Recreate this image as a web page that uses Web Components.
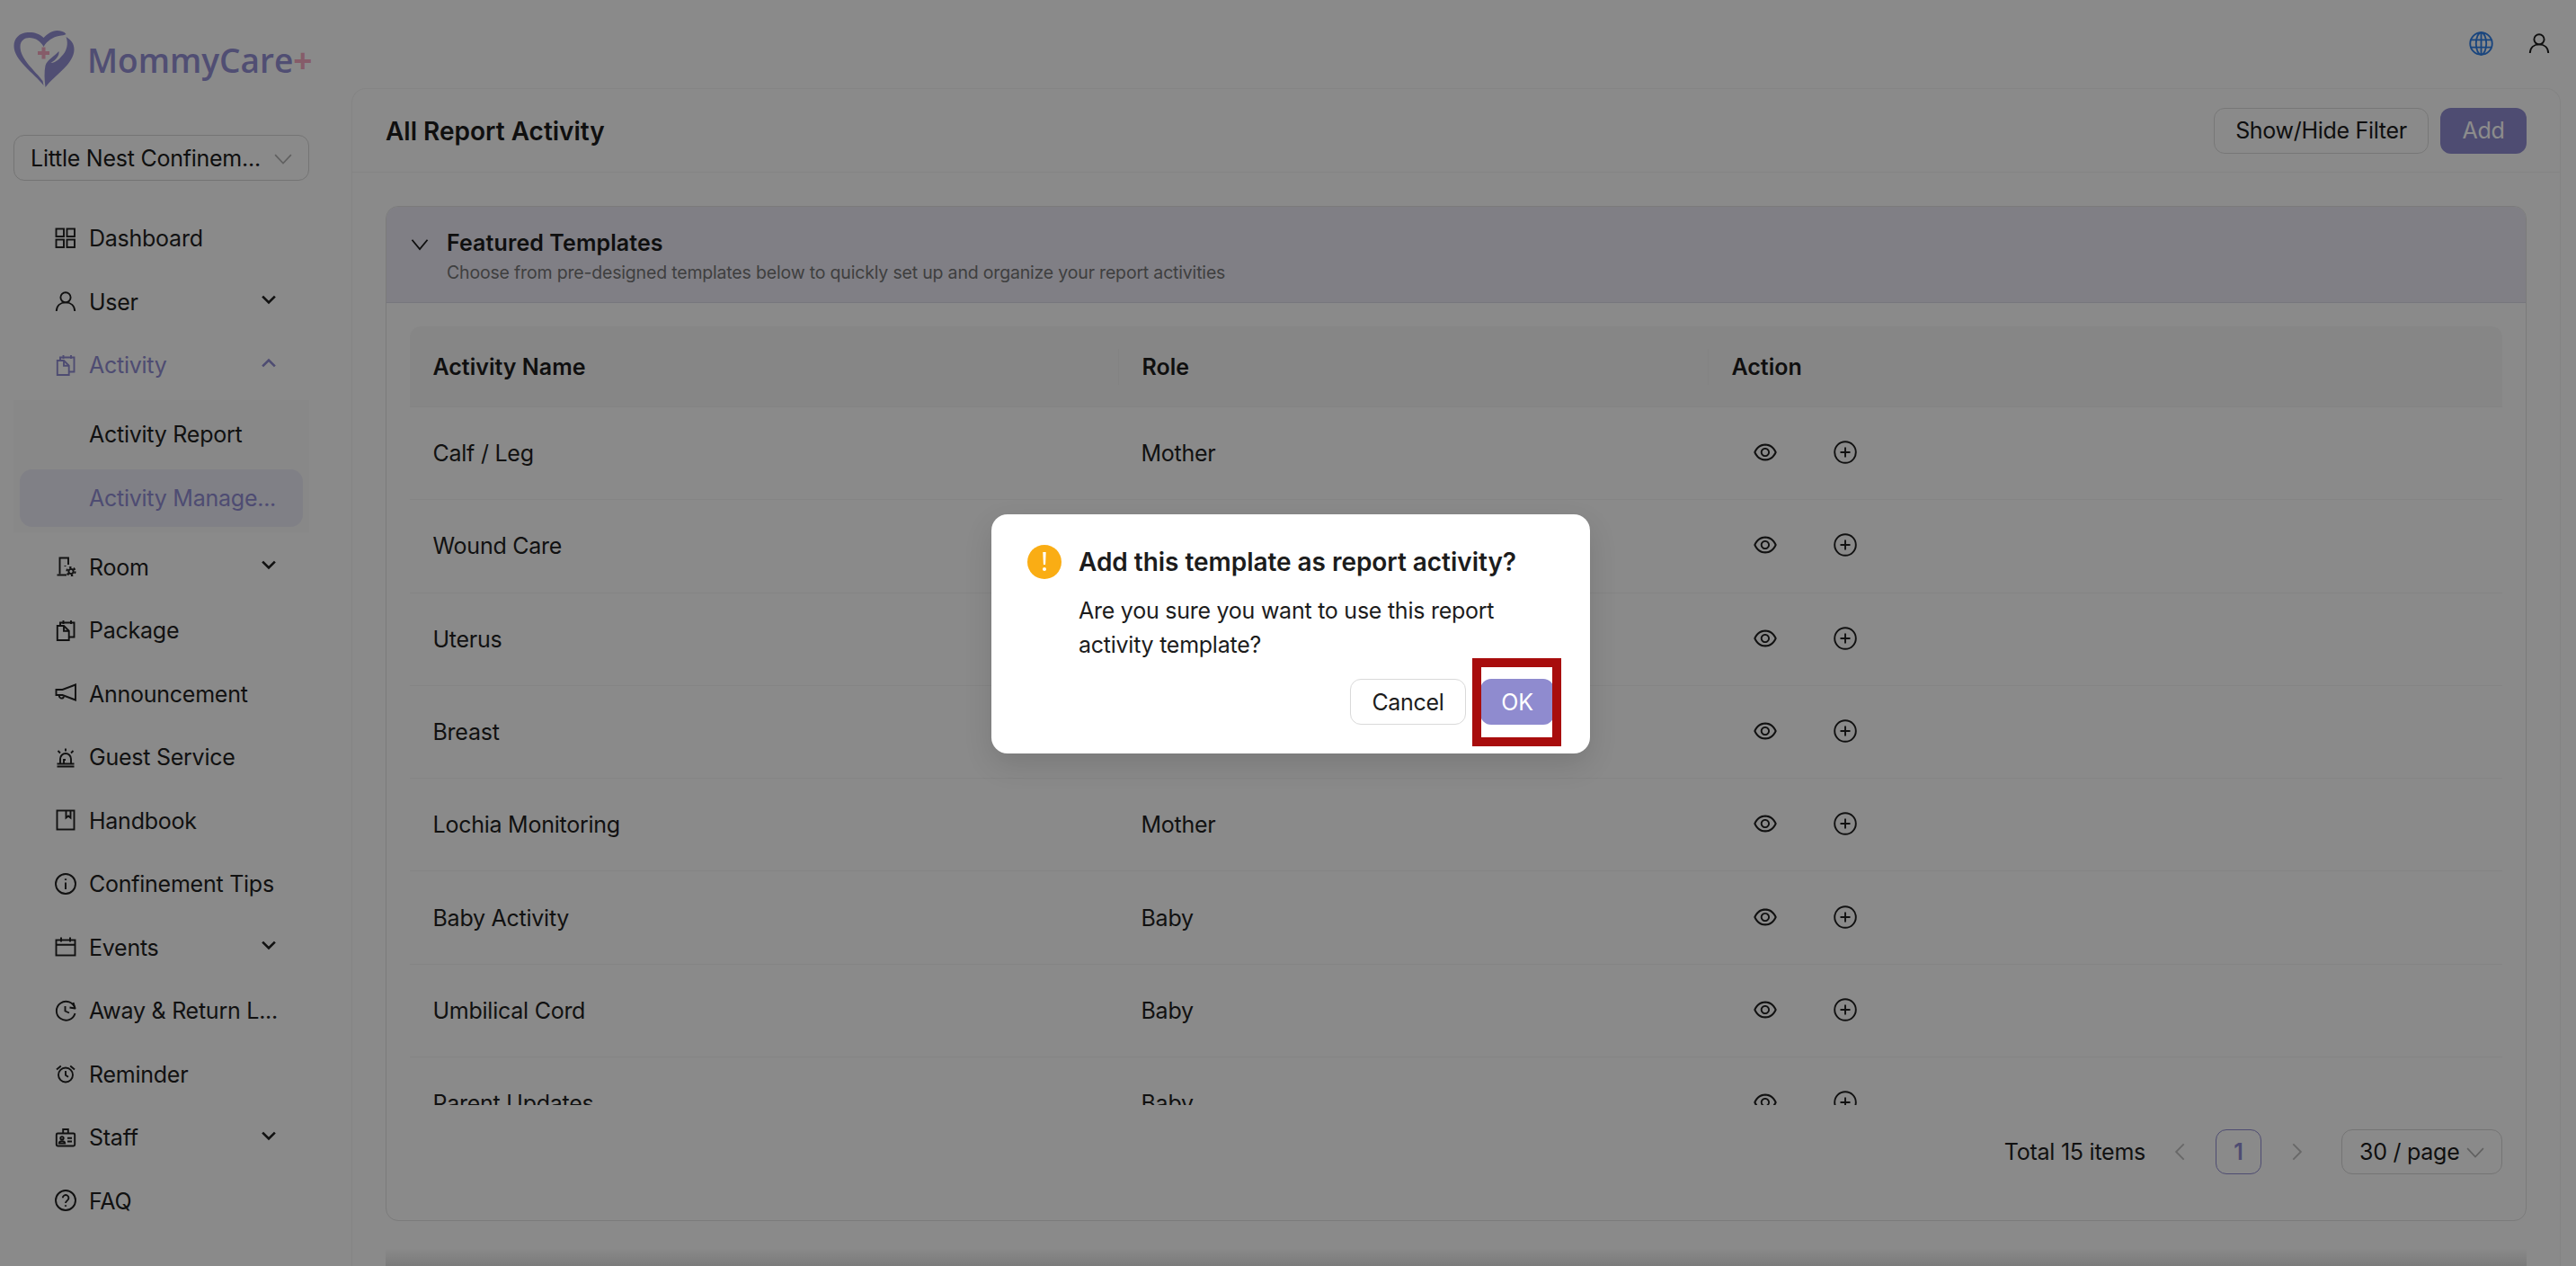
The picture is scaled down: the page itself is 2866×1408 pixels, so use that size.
<!DOCTYPE html>
<html lang="en">
<head>
<meta charset="utf-8">
<title>MommyCare+</title>
<style>
html,body{margin:0;padding:0;height:100%;overflow:hidden;background:#fbfbfb}
body{font-family:Inter,"Liberation Sans",sans-serif;color:#1c1c1c}
</style>
</head>
<body>
<app-shell></app-shell>
<script>
const I = {
 dashboard:'<rect x="1.500" y="1.500" width="8.500" height="8.500"/><rect x="13.500" y="1.500" width="8.500" height="8.500"/><rect x="1.500" y="13.500" width="8.500" height="8.500"/><rect x="13.500" y="13.500" width="8.500" height="8.500"/>',
 user:'<circle cx="12" cy="7.800" r="5.600"/><path d="M1.800 23c.3-6 4.400-9.600 10.200-9.600S21.900 17 22.200 23"/>',
 activity:'<path d="M6 7V3.500h15.500V19.500H16"/><path d="M9.500 1v4M18 1v4"/><path d="M2.800 7H10l5.700 5.700V23H2.800z"/><path d="M10 7v5.700h5.700"/>',
 room:'<path d="M5.500 20.500V2.500H15V10"/><path d="M2.500 21.500H13"/><path d="M11.500 11v1"/><circle cx="18" cy="17.500" r="2.600"/><circle cx="18" cy="17.500" r="4.600" stroke-dasharray="2.400 2.400" stroke-width="2"/>',
 announce:'<path d="M23 2.500 8.500 8H1.500v6h7L23 19.500z"/><path d="M5 14.500c-.8 3.400 4.300 4.300 5 1"/>',
 guest:'<path d="M6 19.500V14a6 6 0 0 1 12 0v5.500"/><path d="M10 19.500v-4.500h2"/><path d="M2.500 19.500h19M2.500 22.500h19"/><path d="M12 2.500V5.500M3.500 5 6 7.500M20.500 5 18 7.500"/>',
 book:'<rect x="2.500" y="1.500" width="19" height="21"/><path d="M12.500 1.500V9.500l2.500-2 2.500 2V1.500"/>',
 info:'<circle cx="12" cy="12" r="11"/><path d="M12 10.500V18"/><path d="M12 6.300v1.600" stroke-width="2.200"/>',
 events:'<rect x="1.500" y="4.500" width="21" height="17"/><path d="M1.500 9.800h21M7 1.500v5M17 1.500v5"/>',
 away:'<path d="M22.500 9.500A10.500 10.500 0 1 0 22.500 15"/><path d="M20.500 3 22.500 9.500 16.500 8.500" stroke-linejoin="round"/><path d="M11.500 7v5.500l4.500 2"/>',
 reminder:'<circle cx="12" cy="13.500" r="8"/><path d="M12 9v4.800l3 2"/><path d="M2 7.500 6.800 3.500M22 7.500 17.200 3.500"/>',
 staff:'<rect x="1.800" y="7.500" width="20.400" height="14" rx="1.500"/><path d="M9.200 8V3h5.600v5"/><circle cx="8" cy="12.800" r="1.700"/><path d="M4.800 18.500c0-3.200 6.400-3.200 6.400 0z"/><path d="M14 12.800h5M14 16.500h5"/>',
 faq:'<circle cx="12" cy="12" r="11"/><path d="M8.800 9.300a3.300 3.300 0 1 1 5 2.900c-1.100.7-1.800 1.300-1.800 2.900"/><path d="M12 17.300v1.500" stroke-width="2.200"/>'
};
const svg=(name,size,sw=1.9)=>`<svg width="${size}" height="${size}" viewBox="0 0 24 24" fill="none" stroke="currentColor" stroke-width="${sw}">${I[name]}</svg>`;
const chevDown=(w=14,sw=2.4)=>`<svg width="${w}" height="${w}" viewBox="0 0 14 14" fill="none" stroke="currentColor" stroke-width="${sw}"><path d="M1 4l6 6 6-6"/></svg>`;
const thin=(d,w=18)=>`<svg width="${w}" height="${w}" viewBox="0 0 18 18" fill="none" stroke="currentColor" stroke-width="1.500"><path d="${d}"/></svg>`;

function el(name,html){
 customElements.define(name,class extends HTMLElement{
  connectedCallback(){ if(this.shadowRoot)return; this.attachShadow({mode:'open'}).innerHTML=typeof html==='function'?html(this):html; }
 });
}

el('mc-logo',`<style>
:host{display:flex;align-items:center;height:64px;gap:14px}
svg{display:block;flex:none}
.t{font:600 37px "Open Sans",sans-serif;color:#938ed2;line-height:64px;margin-top:4px;white-space:nowrap}
.p{color:#f5a8c0;font-weight:700;margin-left:0}
</style>
<svg width="68" height="64" viewBox="0 0 67 64">
<g fill="#938ed2">
<path d="M33 9C28 4 22 2.500 15 3 6 3.500 0 10 0 18c0 16 22 30 33 44l-1-5C24 46 7 33 7 19 7 12 12 9 17 9c7 0 13 4 16 10 4-7 11-11 17-12 4-.5 6-1 8-2-2-3-6-4-10-4-6 0-11 4-15 8z"/>
<path d="M58 8c5 3 9 7 9 14 0 16-21 28-32 42-1-8-1.500-17 0-24 2-7 10-10 15-16 1 5-4 10-9 13 6 0 11-6 15-11 4-6 4-13 2-18z"/>
</g>
<path d="M33 19.500v13M26.500 26h13" stroke="#f5a8c0" stroke-width="4"/>
</svg>
<div class="t">MommyCare<span class="p">+</span></div>`);

el('mc-select',h=>`<style>
:host{display:flex;align-items:center;justify-content:space-between;box-sizing:border-box;border:1.500px solid #d4d4d4;border-radius:12px;background:#fbfbfb;height:${h.getAttribute('h')||51}px;padding:0 ${h.getAttribute('pr')||18}px 0 ${h.getAttribute('pl')||18}px;font-size:25px;letter-spacing:-.25px;white-space:nowrap;color:#1c1c1c}
span{display:flex;color:#b0b0b0}
</style><slot></slot><span>${thin('M1 5.500 9 14l8-8.500',20)}</span>`);

el('nav-item',h=>{
 const ic=h.getAttribute('icon'),ch=h.getAttribute('chev'),act=h.hasAttribute('active'),sel=h.hasAttribute('selected');
 return `<style>
 :host{display:flex;align-items:center;height:64px;margin:0 7px;padding:0 30px 0 39px;box-sizing:border-box;border-radius:14px;font-size:25px;letter-spacing:-.25px;color:${act||sel?'#8f8ad0':'#1f1f1f'};background:${sel?'#e9e9f5':'transparent'};white-space:nowrap}
 .ic{display:flex;width:24px;margin-right:14px;flex:none;justify-content:center;margin-top:-1px}
 .lb{flex:1}
 .ch{display:flex;margin-top:-5px;${ch==='up'?'transform:rotate(180deg);':''}}
 </style><span class="ic">${ic?svg(ic,24):''}</span><span class="lb"><slot></slot></span>${ch?`<span class="ch">${chevDown(16,2.300)}</span>`:''}`;
});

el('side-bar',`<style>
:host{display:block;width:391px;flex:none;box-sizing:border-box;padding:33px 0 0 15px}
mc-select{width:329px;margin:53px 0 32px}
nav{display:flex;flex-direction:column;gap:6.500px;width:329px}
.sub{display:flex;flex-direction:column;gap:6.500px;padding:6.500px 0;background:#f7f7f7}
</style>
<mc-logo></mc-logo>
<mc-select>Little Nest Confinem...</mc-select>
<nav>
<nav-item icon="dashboard">Dashboard</nav-item>
<nav-item icon="user" chev="down">User</nav-item>
<nav-item icon="activity" chev="up" active>Activity</nav-item>
<div class="sub"><nav-item>Activity Report</nav-item><nav-item selected>Activity Manage...</nav-item></div>
<nav-item icon="room" chev="down">Room</nav-item>
<nav-item icon="activity">Package</nav-item>
<nav-item icon="announce">Announcement</nav-item>
<nav-item icon="guest">Guest Service</nav-item>
<nav-item icon="book">Handbook</nav-item>
<nav-item icon="info">Confinement Tips</nav-item>
<nav-item icon="events" chev="down">Events</nav-item>
<nav-item icon="away">Away &amp; Return L...</nav-item>
<nav-item icon="reminder">Reminder</nav-item>
<nav-item icon="staff" chev="down">Staff</nav-item>
<nav-item icon="faq">FAQ</nav-item>
</nav>`);

el('top-bar',`<style>
:host{display:flex;justify-content:flex-end;align-items:center;gap:39px;height:96px;margin-bottom:2px;padding-right:29px;color:#1c1c1c}
svg{display:block}
</style>
<svg width="27" height="27" viewBox="0 0 26 26" fill="none" stroke="#2f7fe6" stroke-width="1.800"><circle cx="13" cy="13" r="11.800"/><ellipse cx="13" cy="13" rx="5.500" ry="11.800"/><path d="M13 1v24M2 9h22M2 17h22"/></svg>
${svg('user',24,1.900)}`);

el('mc-button',h=>{
 const p=h.hasAttribute('primary');
 return `<style>
 :host{display:inline-flex;align-items:center;justify-content:center;box-sizing:border-box;height:51px;width:${h.getAttribute('w')}px;border-radius:12px;font-size:25px;letter-spacing:-.3px;white-space:nowrap;${p?'background:#8f8bcf;color:#fff;':'background:'+(h.hasAttribute('light')?'#fff':'#fbfbfb')+';border:1.500px solid #d9d9d9;color:#1c1c1c;'}}
 </style><slot></slot>`;
});

el('table-row',h=>`<style>
:host{display:grid;grid-template-columns:788px 656px 1fr;height:103.300px;align-items:center;border-bottom:1.500px solid #f0f0f0;box-sizing:border-box;font-size:25px;letter-spacing:-.25px;color:#1f1f1f}
div{padding-left:25.500px}
.a{display:flex;align-items:center;gap:63px;padding-left:51px;height:26px;margin-top:-2px}
svg{display:block}
</style>
<div><slot></slot></div><div>${h.getAttribute('role')}</div>
<div class="a">
<svg width="26" height="26" viewBox="64 64 896 896" fill="currentColor"><path d="M942.200 486.200C847.400 286.500 704.100 186 512 186c-192.200 0-335.400 100.500-430.200 300.300a60.300 60.300 0 000 51.500C176.600 737.500 319.900 838 512 838c192.200 0 335.400-100.500 430.200-300.300 7.700-16.200 7.700-35 0-51.500zM512 766c-161.300 0-279.400-81.800-362.700-254C232.600 339.800 350.700 258 512 258c161.300 0 279.400 81.800 362.700 254C791.500 684.200 673.400 766 512 766zm-4-430c-97.200 0-176 78.800-176 176s78.800 176 176 176 176-78.800 176-176-78.800-176-176-176zm0 288c-61.900 0-112-50.100-112-112s50.100-112 112-112 112 50.100 112 112-50.100 112-112 112z"/></svg>
<svg width="26" height="26" viewBox="0 0 26 26" fill="none" stroke="currentColor" stroke-width="1.900"><circle cx="13" cy="13" r="11.800"/><path d="M13 7.500v11M7.500 13h11"/></svg>
</div>`);

el('data-table',`<style>
:host{display:block;height:866px;overflow:hidden}
.h{display:grid;grid-template-columns:788px 656px 1fr;align-items:center;height:90px;box-sizing:border-box;background:#f5f5f5;border-bottom:1.500px solid #f0f0f0;border-radius:12px 12px 0 0;font-weight:600;font-size:25px;color:#1c1c1c}
.h div{padding-left:25.500px;line-height:40px}
.h div+div{border-left:1.500px solid #efefef}
</style>
<div class="h"><div>Activity Name</div><div>Role</div><div>Action</div></div>
<slot></slot>`);

el('mc-pagination',`<style>
:host{display:flex;justify-content:flex-end;align-items:center;height:50px;font-size:25px;letter-spacing:-.25px;color:#1f1f1f}
.t{margin-right:14px}
.n{width:50px;display:flex;justify-content:center;color:#bdbdbd}
.p{box-sizing:border-box;width:51px;height:50px;margin:0 14px;display:flex;align-items:center;justify-content:center;border:1.500px solid #8f8bcf;border-radius:12px;color:#8f8bcf;font-weight:600}
mc-select{width:179px;margin-left:25px}
</style>
<span class="t">Total 15 items</span>
<span class="n">${thin('M12 2 5 9l7 7',22)}</span>
<span class="p">1</span>
<span class="n">${thin('M6 2l7 7-7 7',22)}</span>
<mc-select h="50" pl="19" pr="19">30 / page</mc-select>`);

el('collapse-panel',h=>`<style>
:host{display:block;border:1.500px solid #e0e0e0;border-radius:14px;overflow:hidden}
.hd{display:flex;height:107px;box-sizing:border-box;padding:0 0 0 26px;background:#e9e8f3;border-bottom:1.500px solid #d9d9e4;align-items:center;gap:19px}
.hd svg{display:block;margin-top:-24px;color:#1c1c1c}
h2{margin:0;font-size:25px;font-weight:600;letter-spacing:.1px;color:#1c1c1c;line-height:36px;margin-top:2px}
p{margin:1px 0 0;font-size:19.500px;letter-spacing:-.18px;color:#737373;line-height:28px}
.bd{padding:26px 26px 51px}
</style>
<div class="hd">${thin('M2 5.500 9 14l7-8.500',22)}<div><h2>${h.getAttribute('heading')}</h2><p>${h.getAttribute('sub')}</p></div></div>
<div class="bd"><slot></slot></div>`);

el('report-card',`<style>
:host{display:block;flex:1;margin-right:17px;box-sizing:border-box;border:1.500px solid #f0f0f0;border-bottom:0;border-radius:16px 16px 0 0;overflow:hidden}
.hd{display:flex;align-items:center;justify-content:space-between;height:93px;box-sizing:border-box;padding:0 37px;border-bottom:1.500px solid #f0f0f0}
h1{margin:2px 0 0;font-size:28px;font-weight:600;color:#1c1c1c}
.b{display:flex;gap:13px}
.bd{padding:37px 37px 0}
.next{height:60px;margin-top:31px;background:linear-gradient(#fafafa,#dedede 20px)}
</style>
<div class="hd"><h1>All Report Activity</h1><div class="b"><mc-button w="239">Show/Hide Filter</mc-button><mc-button primary w="96">Add</mc-button></div></div>
<div class="bd"><slot></slot><div class="next"></div></div>`);

el('confirm-modal',`<style>
:host{display:block;position:absolute;left:1103px;top:572px;width:666px;height:266px;box-sizing:border-box;padding:34px 40px 0;background:#fff;border-radius:18px;box-shadow:0 12px 32px rgba(0,0,0,.12);color:#1c1c1c;font-size:25px;letter-spacing:-.25px}
.t{display:flex;align-items:center;gap:19px;font-weight:600;font-size:28px;letter-spacing:-.04px;line-height:38px}
.i{width:38px;height:38px;border-radius:50%;background:#faad14;color:#fff;display:flex;align-items:center;justify-content:center;flex:none}
.b{margin:16px 0 0 57px;line-height:38px}
.a{display:flex;justify-content:flex-end;gap:16px;margin-top:19px}
.ring{position:absolute;left:535px;top:160px;width:99px;height:98px;box-sizing:border-box;border:10px solid #a80d0d}
</style>
<div class="t"><span class="i"><svg width="6" height="22" viewBox="0 0 6 22" fill="#fff"><path d="M1.300 0h3.400l-.6 14H1.900z"/><circle cx="3" cy="19" r="2"/></svg></span>Add this template as report activity?</div>
<div class="b">Are you sure you want to use this report<br>activity template?</div>
<div class="a"><mc-button light w="129">Cancel</mc-button><mc-button primary w="82">OK</mc-button></div>
<div class="ring"></div>`);

const rows=[['Calf / Leg','Mother'],['Wound Care','Mother'],['Uterus','Mother'],['Breast','Mother'],['Lochia Monitoring','Mother'],['Baby Activity','Baby'],['Umbilical Cord','Baby'],['Parent Updates','Baby']];
el('app-shell',`<style>
:host{display:flex;height:1408px;width:2866px;overflow:hidden;position:relative;background:#fbfbfb}
.m{flex:1;min-width:0;display:flex;flex-direction:column}
.ov{position:absolute;inset:0;background:rgba(0,0,0,.45)}
</style>
<side-bar></side-bar>
<div class="m"><top-bar></top-bar>
<report-card>
<collapse-panel heading="Featured Templates" sub="Choose from pre-designed templates below to quickly set up and organize your report activities">
<data-table>${rows.map(r=>`<table-row role="${r[1]}">${r[0]}</table-row>`).join('')}</data-table>
<mc-pagination style="margin-top:27px"></mc-pagination>
</collapse-panel>
</report-card></div>
<div class="ov"></div>
<confirm-modal></confirm-modal>`);
</script>
</body>
</html>
